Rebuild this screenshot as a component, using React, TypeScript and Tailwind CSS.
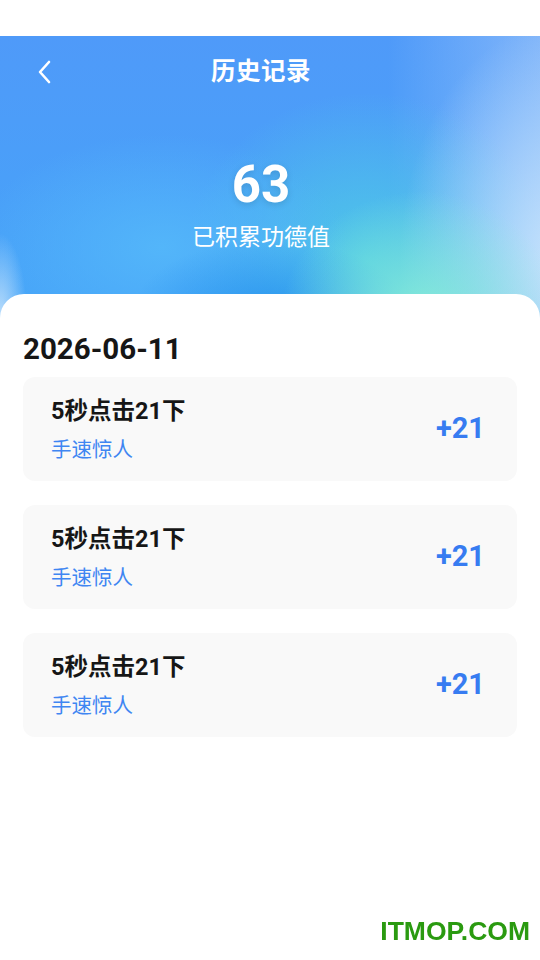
import React from 'react';

interface Record {
  title: string;
  tag: string;
  points: number;
}

const records: Record[] = [
  { title: '5秒点击21下', tag: '手速惊人', points: 21 },
  { title: '5秒点击21下', tag: '手速惊人', points: 21 },
  { title: '5秒点击21下', tag: '手速惊人', points: 21 },
];

const font = { fontFamily: 'Roboto, "Noto Sans CJK SC", sans-serif' };

const RecordCard: React.FC<{ item: Record }> = ({ item }) => (
  <div className="flex items-center justify-between h-[104px] rounded-[12px] bg-[#f9f9f9] pl-7 pr-8">
    <div className="flex flex-col">
      <span className="text-[23.5px] leading-[30px] font-bold text-[#161616]">{item.title}</span>
      <span className="mt-[11px] text-[20.5px] leading-[26px] text-[#3f86f2]">{item.tag}</span>
    </div>
    <span className="text-[29px] font-bold text-[#377cf1]">+{item.points}</span>
  </div>
);

const App: React.FC = () => {
  return (
    <div className="min-h-[960px] bg-white flex flex-col" style={font}>
      <div className="h-9 bg-white" />
      <header className="h-[282px] flex flex-col text-white pr-[18px] bg-[radial-gradient(ellipse_26%_45%_at_78%_100%,rgba(135,238,214,0.95),transparent),radial-gradient(ellipse_30%_85%_at_104%_80%,rgba(200,228,252,1),transparent),radial-gradient(ellipse_5%_30%_at_0%_100%,rgba(200,228,252,0.9),transparent),radial-gradient(ellipse_26%_28%_at_50%_100%,rgba(38,145,238,0.9),transparent),radial-gradient(ellipse_35%_40%_at_30%_75%,rgba(85,185,250,0.85),transparent),radial-gradient(ellipse_34%_60%_at_68%_80%,rgba(80,205,228,0.9),transparent),linear-gradient(90deg,transparent_72%,rgba(145,190,250,0.75)),linear-gradient(180deg,#4f9af9,#45a4f8)]">
        <div className="relative h-[72px] flex items-center justify-center">
          <button className="absolute left-[30px] top-[22px] w-7 h-7 flex items-center justify-center">
            <svg width="16" height="26" viewBox="0 0 16 26" fill="none">
              <path d="M13 3 L4 13 L13 23" stroke="white" strokeWidth="2.6" strokeLinecap="round" strokeLinejoin="round" />
            </svg>
          </button>
          <h1 className="text-[24.5px] font-bold tracking-[0.5px]">历史记录</h1>
        </div>
        <div className="flex flex-col items-center mt-[49px]">
          <span className="text-[51px] leading-[56px] font-bold drop-shadow-[0_2px_3px_rgba(0,0,0,0.12)]">63</span>
          <span className="mt-[10px] text-[23px] leading-[30px]">已积累功德值</span>
        </div>
      </header>
      <main className="-mt-6 flex-1 bg-white rounded-t-[24px] px-[23px] pt-[38px]">
        <h2 className="text-[29.5px] leading-[34px] font-bold text-[#161616]">2026-06-11</h2>
        <div className="mt-[11px] flex flex-col gap-6">
          {records.map((r, i) => (
            <RecordCard key={i} item={r} />
          ))}
        </div>
      </main>
      <div className="fixed right-[10px] bottom-[8px] text-[26.5px] font-bold text-[#2a9a10]" style={{ fontFamily: '"Liberation Sans", Arial, sans-serif' }}>
        ITMOP.COM
      </div>
    </div>
  );
};

export default App;
